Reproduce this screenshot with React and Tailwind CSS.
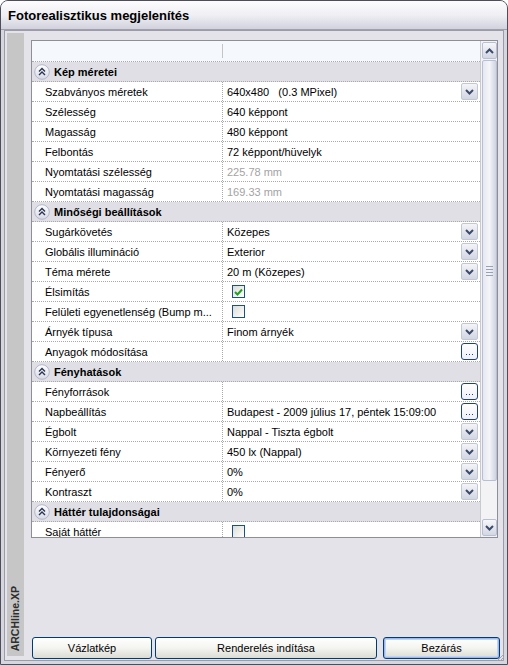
import React from 'react';

// Fotorealisztikus megjelenítés — XP style property dialog

const sections = [
  {
    title: 'Kép méretei',
    rows: [
      { label: 'Szabványos méretek', value: '640x480   (0.3 MPixel)', kind: 'drop' },
      { label: 'Szélesség', value: '640 képpont' },
      { label: 'Magasság', value: '480 képpont' },
      { label: 'Felbontás', value: '72 képpont/hüvelyk' },
      { label: 'Nyomtatási szélesség', value: '225.78 mm', dim: true },
      { label: 'Nyomtatási magasság', value: '169.33 mm', dim: true },
    ],
  },
  {
    title: 'Minőségi beállítások',
    rows: [
      { label: 'Sugárkövetés', value: 'Közepes', kind: 'drop' },
      { label: 'Globális illumináció', value: 'Exterior', kind: 'drop' },
      { label: 'Téma mérete', value: '20 m (Közepes)', kind: 'drop' },
      { label: 'Élsimítás', kind: 'check', checked: true },
      { label: 'Felületi egyenetlenség (Bump m...', kind: 'check', checked: false },
      { label: 'Árnyék típusa', value: 'Finom árnyék', kind: 'drop' },
      { label: 'Anyagok módosítása', value: '', kind: 'more' },
    ],
  },
  {
    title: 'Fényhatások',
    rows: [
      { label: 'Fényforrások', value: '', kind: 'more' },
      { label: 'Napbeállítás', value: 'Budapest - 2009 július 17, péntek 15:09:00', kind: 'more' },
      { label: 'Égbolt', value: 'Nappal - Tiszta égbolt', kind: 'drop' },
      { label: 'Környezeti fény', value: '450 lx (Nappal)', kind: 'drop' },
      { label: 'Fényerő', value: '0%', kind: 'drop' },
      { label: 'Kontraszt', value: '0%', kind: 'drop' },
    ],
  },
  {
    title: 'Háttér tulajdonságai',
    rows: [{ label: 'Saját háttér', kind: 'check', checked: false }],
  },
];

const Chevron = ({ up = false }) => (
  <svg width="9" height="6" viewBox="0 0 9 6">
    <polyline
      points={up ? '1,5 4.5,1.5 8,5' : '1,1 4.5,4.5 8,1'}
      fill="none"
      stroke="#3d4b6b"
      strokeWidth="2"
    />
  </svg>
);

const DropButton = () => (
  <div className="w-[17px] h-[17px] rounded-[2px] border border-[#c3c7d3] bg-gradient-to-b from-[#f4f5f8] to-[#d2d6e2] flex items-center justify-center">
    <Chevron />
  </div>
);

// the "..." glyphs on the browse button
const MoreButton = () => (
  <div className="w-[17px] h-[17px] rounded-[3px] border border-[#21407e] bg-gradient-to-b from-white to-[#eef0f6] flex items-end justify-center pb-[4px]">
    <svg width="7" height="1" viewBox="0 0 7 1">
      <rect x="0" y="0" width="1" height="1" fill="#21407e" />
      <rect x="3" y="0" width="1" height="1" fill="#21407e" />
      <rect x="6" y="0" width="1" height="1" fill="#21407e" />
    </svg>
  </div>
);

const CheckBox = ({ checked }) => (
  <div className="ml-[5px] w-[13px] h-[13px] border border-[#1c5180] bg-gradient-to-br from-[#dcdcd7] to-white flex items-center justify-center">
    {checked && (
      <svg width="9" height="8" viewBox="0 0 9 8">
        <polyline points="1,4 3.5,6.5 8,1.5" fill="none" stroke="#21a121" strokeWidth="2" />
      </svg>
    )}
  </div>
);

const CollapseIcon = () => (
  <svg width="16" height="16" viewBox="0 0 16 16">
    <defs>
      <linearGradient id="cg" x1="0" y1="0" x2="0" y2="1">
        <stop offset="0" stopColor="#ffffff" />
        <stop offset="1" stopColor="#d6d8e6" />
      </linearGradient>
    </defs>
    <circle cx="8" cy="8" r="7.3" fill="url(#cg)" stroke="#b2b6c8" />
    <polyline points="5,7.5 8,4.5 11,7.5" fill="none" stroke="#2a3450" strokeWidth="1.4" />
    <polyline points="5,11 8,8 11,11" fill="none" stroke="#2a3450" strokeWidth="1.4" />
  </svg>
);

const PropRow = ({ row }) => (
  <div className="h-[20px] shrink-0 flex border-b border-dotted border-[#a9a9a9] bg-white">
    <div className="w-[190px] shrink-0 pl-[13px] pt-px flex items-center truncate whitespace-nowrap">
      {row.label}
    </div>
    <div className="w-px border-l border-dotted border-[#a9a9a9]" />
    <div className="flex-1 flex items-center pl-[4px] pr-[2px] min-w-0">
      {row.kind === 'check' ? (
        <CheckBox checked={row.checked} />
      ) : (
        <span className={`flex-1 pt-px whitespace-pre truncate ${row.dim ? 'text-[#a3a3a3]' : ''}`}>{row.value}</span>
      )}
      {row.kind === 'drop' && <DropButton />}
      {row.kind === 'more' && <MoreButton />}
    </div>
  </div>
);

const SectionRow = ({ title }) => (
  <div className="h-[20px] shrink-0 flex items-center gap-[4px] pl-[2px] bg-[#dfdfe5] border-b border-dotted border-[#a9a9a9]">
    <CollapseIcon />
    <span className="font-bold pt-px">{title}</span>
  </div>
);

const ScrollBar = () => (
  <div className="w-[17px] shrink-0 bg-[#f3f3f6] border-l border-[#c9c9d2] flex flex-col items-center pt-[1px] gap-[1px]">
    <div className="w-[15px] h-[17px] shrink-0 rounded-[2px] border border-[#b9bfd2] bg-gradient-to-b from-[#f6f7fa] to-[#d3d7e4] flex items-center justify-center">
      <Chevron up />
    </div>
    <div className="w-[15px] h-[421px] shrink-0 rounded-[2px] border border-[#b9bfd2] bg-gradient-to-r from-[#e6e8f0] via-[#f4f5f9] to-[#cfd3e0] flex flex-col items-center justify-center gap-[2px]">
      <div className="w-[7px] h-px bg-[#9aa0b4]" />
      <div className="w-[7px] h-px bg-[#9aa0b4]" />
      <div className="w-[7px] h-px bg-[#9aa0b4]" />
      <div className="w-[7px] h-px bg-[#9aa0b4]" />
    </div>
    <div className="flex-1" />
    <div className="w-[15px] h-[17px] shrink-0 mb-[1px] rounded-[2px] border border-[#b9bfd2] bg-gradient-to-b from-[#f6f7fa] to-[#d3d7e4] flex items-center justify-center">
      <Chevron />
    </div>
  </div>
);

const XpButton = ({ children, width, focused }) => (
  <button
    className={`${width} h-[22px] rounded-[3px] border border-[#003c74] bg-gradient-to-b from-white via-[#f4f4f0] to-[#dcdcd6] text-[11px] text-black ${focused ? 'shadow-[inset_0_0_0_1px_#9db8ec,inset_0_0_0_2px_#c2d4f4]' : ''}`}
  >
    {children}
  </button>
);

export default function App() {
  return (
    <div className="relative w-[508px] h-[665px] flex flex-col bg-[#d6d6de] border border-[#4e4e5a] rounded-t-[8px] overflow-hidden font-['Liberation_Sans',Arial,sans-serif] text-[11px] text-black">
      {/* Title bar */}
      <div className="h-[29px] shrink-0 flex items-center pl-[7px] pt-[2px] bg-gradient-to-b from-[#fdfdfe] via-[#efeff4] to-[#d2d2de] border-b border-[#a0a0ac]">
        <span className="text-[13px] font-bold">Fotorealisztikus megjelenítés</span>
      </div>

      {/* Body */}
      <div className="flex-1 flex mx-[3px] mb-[3px] border border-[#9c9ca8] bg-[#e3e3e9]">
        {/* Brand strip */}
        <div className="ml-[2px] mt-[2px] mb-[4px] w-[17px] shrink-0 bg-[#c6c6c6] flex flex-col justify-end items-center pb-[5px]">
          <span className="[writing-mode:vertical-rl] rotate-180 font-bold text-[10.5px] text-[#2e2e2e] leading-none">
            ARCHline.XP
          </span>
        </div>

        {/* Main */}
        <div className="ml-[7px] pt-[9px] pb-[1px] w-[470px] flex flex-col">
          {/* Property grid */}
          <div className="w-[467px] h-[498px] shrink-0 border border-[#8e8e98] bg-white flex overflow-hidden">
            <div className="flex-1 min-w-0 flex flex-col overflow-hidden">
              <div className="h-[21px] shrink-0 flex bg-[#f5f8fc] border-b border-dotted border-[#a9a9a9]">
                <div className="w-[190px]" />
                <div className="w-px h-[14px] mt-[3px] bg-[#c4c4c4]" />
              </div>
              {sections.map((s) => (
                <React.Fragment key={s.title}>
                  <SectionRow title={s.title} />
                  {s.rows.map((r) => (
                    <PropRow key={r.label} row={r} />
                  ))}
                </React.Fragment>
              ))}
            </div>
            <ScrollBar />
          </div>

          <div className="flex-1" />

          {/* Buttons */}
          <div className="flex items-center pl-[1px]">
            <XpButton width="w-[120px]">Vázlatkép</XpButton>
            <div className="w-[3px]" />
            <XpButton width="w-[222px]">Renderelés indítása</XpButton>
            <div className="w-[6px]" />
            <XpButton width="w-[117px]" focused>
              Bezárás
            </XpButton>
          </div>
        </div>
      </div>

      {/* Resize grip */}
      <svg className="absolute right-[2px] bottom-[2px]" width="10" height="10" viewBox="0 0 10 10">
        <path d="M9 2 L2 9 M9 5 L5 9 M9 8 L8 9" stroke="#a6a6ae" strokeWidth="1" />
      </svg>
    </div>
  );
}
